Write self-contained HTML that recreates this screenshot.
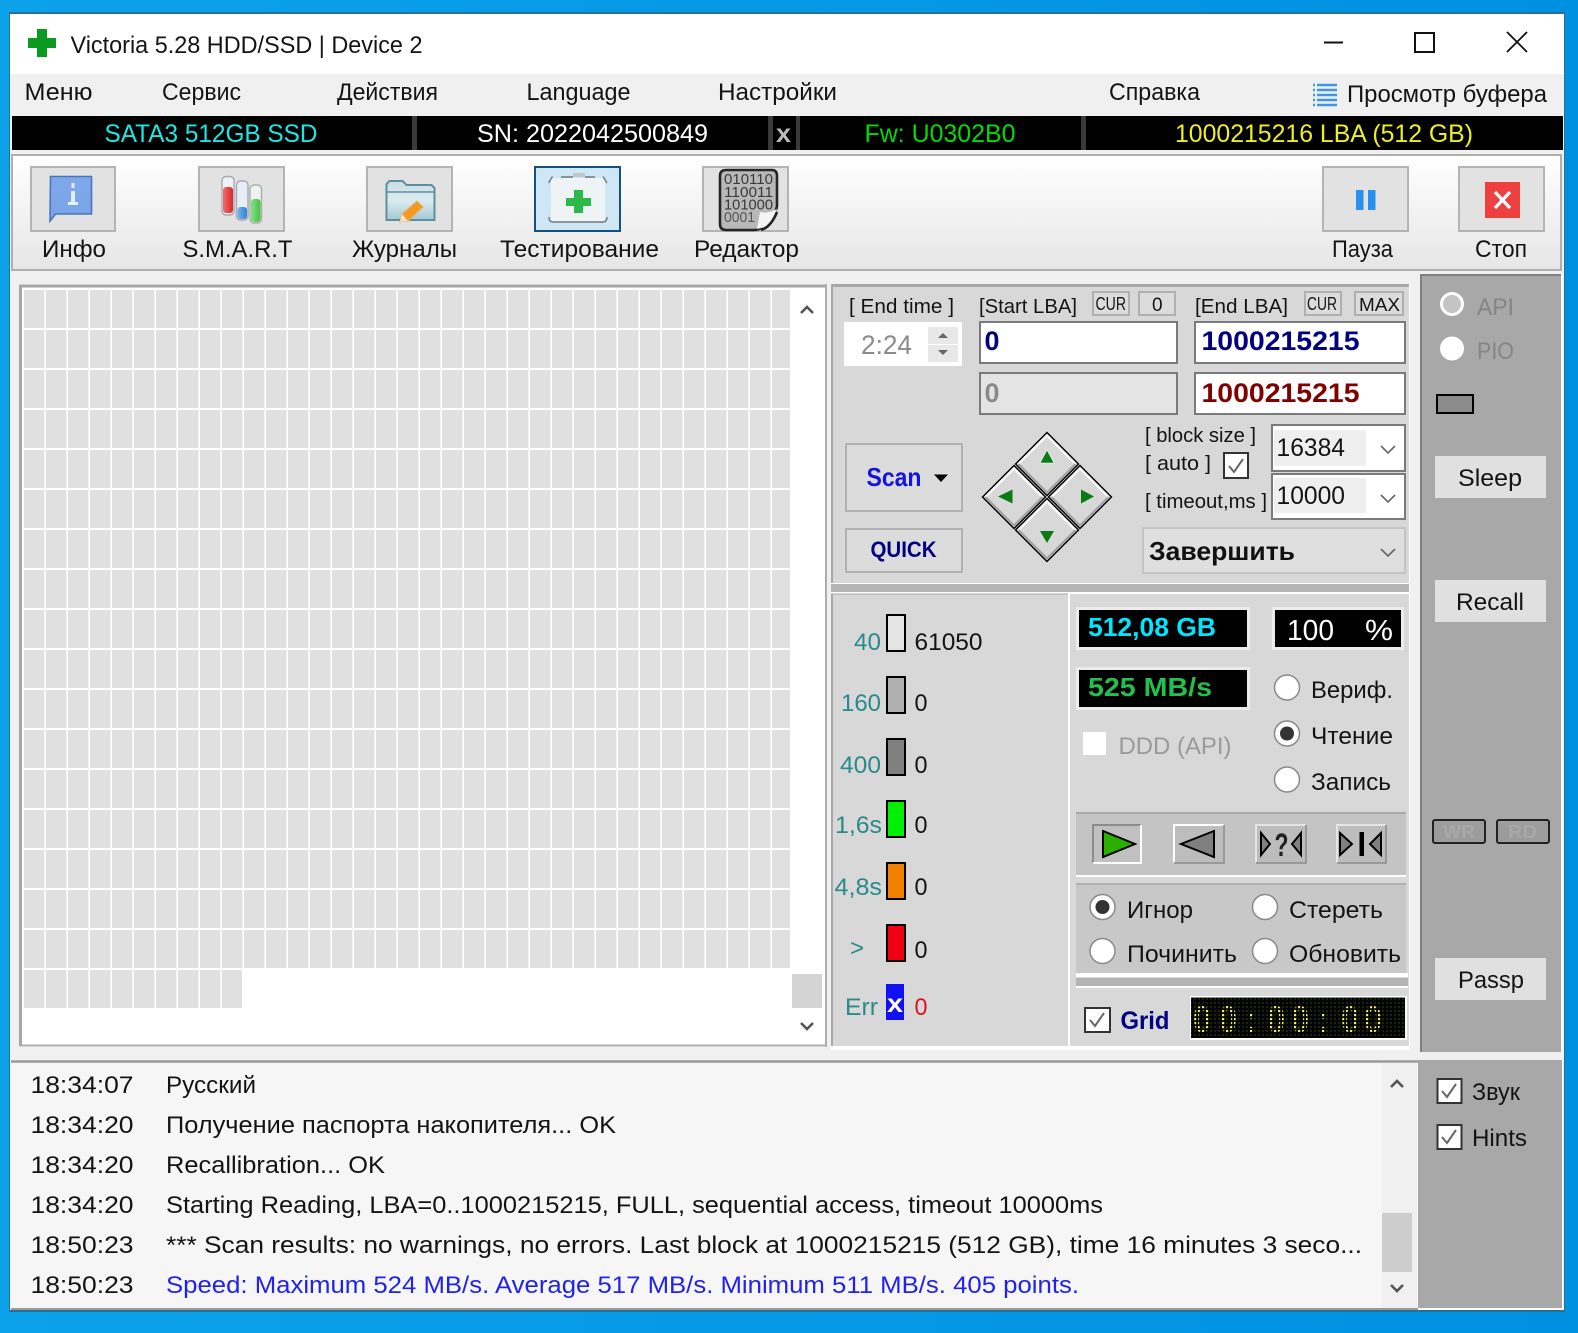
<!DOCTYPE html>
<html lang="ru"><head><meta charset="utf-8"><title>Victoria 5.28</title>
<style>
html,body{margin:0;padding:0;width:1578px;height:1333px;overflow:hidden;background:#0a9ae8}
svg{display:block}
text{font-family:"Liberation Sans","DejaVu Sans",sans-serif;fill:#141414;font-size:24px;white-space:pre}
.b{font-weight:bold}
.t{fill:#2a8a8c}
.btn{fill:#e2e2e2;stroke:#b4b4b4;stroke-width:2}
.sm{fill:#dcdcdc;stroke:#b0b0b0;stroke-width:2}
.inp{fill:#fff;stroke:#7a7a7a;stroke-width:2}
.chev{fill:none;stroke:#666;stroke-width:1.6}
.sbtn{fill:#e0e0e0}
.led{fill:url(#leddot);font-size:37px;font-weight:bold}
</style></head><body>
<svg width="1578" height="1333" viewBox="0 0 1578 1333" xmlns="http://www.w3.org/2000/svg">
<defs>
<linearGradient id="bg" x1="0" x2="1" y1="0" y2="0"><stop offset="0" stop-color="#0ba2ea"/><stop offset="1" stop-color="#0090e2"/></linearGradient>
<linearGradient id="tb" x1="0" x2="0" y1="0" y2="1"><stop offset="0" stop-color="#ffffff"/><stop offset="1" stop-color="#e6e6e6"/></linearGradient>
<linearGradient id="fold" x1="0" x2="0" y1="0" y2="1"><stop offset="0" stop-color="#c9dde4"/><stop offset=".5" stop-color="#dcecf0"/><stop offset="1" stop-color="#a3c9d2"/></linearGradient>
<linearGradient id="inf" x1="0" x2="0" y1="0" y2="1"><stop offset="0" stop-color="#7fa9ec"/><stop offset="1" stop-color="#78a4e6"/></linearGradient>
<linearGradient id="red" x1="0" x2="1" y1="0" y2="0"><stop offset="0" stop-color="#ec7070"/><stop offset=".7" stop-color="#e23a3a"/><stop offset="1" stop-color="#c83030"/></linearGradient>
<linearGradient id="blu" x1="0" x2="1" y1="0" y2="0"><stop offset="0" stop-color="#7ab4ea"/><stop offset="1" stop-color="#2a80d8"/></linearGradient>
<linearGradient id="grn" x1="0" x2="1" y1="0" y2="0"><stop offset="0" stop-color="#84e084"/><stop offset="1" stop-color="#48c048"/></linearGradient>
<pattern id="cells" x="24" y="290" width="22" height="40" patternUnits="userSpaceOnUse"><rect width="20.4" height="38" fill="#e0e0e0"/></pattern>
<pattern id="ledbg" x="1193" y="1005" width="4" height="4" patternUnits="userSpaceOnUse"><rect width="4" height="4" fill="#020302"/><rect x="1" y="1" width="2" height="2" fill="#1a2410"/></pattern>
<pattern id="leddot" x="1193" y="1005" width="4" height="4" patternUnits="userSpaceOnUse"><rect x="1" y="1" width="2.2" height="2.2" fill="#f0f05a"/></pattern>
<g id="dm">
<path d="M0 -31.5L31.5 0 0 31.5 -31.5 0z" fill="#d8d8d8" stroke="#000" stroke-width="1.4"/>
<path d="M-28.5 0L0 -28.5 28.5 0" fill="none" stroke="#fff" stroke-width="2"/>
<path d="M28.5 0L0 28.5 -28.5 0" fill="none" stroke="#a0a0a0" stroke-width="2"/>
</g>
</defs>

<rect width="1578" height="1333" fill="url(#bg)"/>
<!-- window -->
<rect x="9" y="12" width="1556" height="1300" fill="#2a6f94"/>
<rect x="10" y="14" width="1554" height="1296" fill="#f0f0f0"/>
<rect x="10" y="14" width="1554" height="60" fill="#fff"/>
<path d="M37 29h10v9h9v10h-9v9h-10v-9h-9v-10h9z" fill="#0a9a20"/>
<text x="70.5" y="53" textLength="352" lengthAdjust="spacingAndGlyphs">Victoria 5.28 HDD/SSD | Device 2</text>
<path d="M1324 42.5h19" stroke="#111" stroke-width="2"/>
<rect x="1415" y="33" width="19" height="19" fill="none" stroke="#111" stroke-width="2"/>
<path d="M1507 32l20 20M1527 32l-20 20" stroke="#111" stroke-width="1.8"/>

<!-- menu -->
<text x="24.5" y="100" textLength="68" lengthAdjust="spacingAndGlyphs">Меню</text>
<text x="162" y="100" textLength="79" lengthAdjust="spacingAndGlyphs">Сервис</text>
<text x="337" y="100" textLength="101" lengthAdjust="spacingAndGlyphs">Действия</text>
<text x="526.5" y="100" textLength="104" lengthAdjust="spacingAndGlyphs">Language</text>
<text x="718" y="100" textLength="119" lengthAdjust="spacingAndGlyphs">Настройки</text>
<text x="1109" y="100" textLength="91" lengthAdjust="spacingAndGlyphs">Справка</text>
<path d="M1317 85h20M1317 90h20M1317 95h20M1317 100h20M1317 105h20" stroke="#3f97e4" stroke-width="2.4"/>
<path d="M1313 85h2M1313 90h2M1313 95h2M1313 100h2M1313 105h2" stroke="#3f97e4" stroke-width="2.4"/>
<text x="1347" y="102" textLength="200" lengthAdjust="spacingAndGlyphs">Просмотр буфера</text>

<!-- black bar -->
<rect x="12" y="116" width="1551" height="34" fill="#000"/>
<rect x="412" y="116" width="5" height="34" fill="#3a3a3a"/>
<rect x="768" y="116" width="5" height="34" fill="#3a3a3a"/>
<rect x="796" y="116" width="4" height="34" fill="#3a3a3a"/>
<rect x="1081" y="116" width="5" height="34" fill="#3a3a3a"/>
<text x="104.5" y="142" textLength="213" lengthAdjust="spacingAndGlyphs" style="fill:#1fe6e0;font-size:25px">SATA3 512GB SSD</text>
<text x="477" y="142" textLength="231" lengthAdjust="spacingAndGlyphs" style="fill:#fff;font-size:25px">SN: 2022042500849</text>
<text x="776" y="142" textLength="15" lengthAdjust="spacingAndGlyphs" class="b" style="fill:#bbb;font-size:25px">x</text>
<text x="864.5" y="142" textLength="151" lengthAdjust="spacingAndGlyphs" style="fill:#00dc00;font-size:25px">Fw: U0302B0</text>
<text x="1175" y="142" textLength="298" lengthAdjust="spacingAndGlyphs" style="fill:#eeee22;font-size:25px">1000215216 LBA (512 GB)</text>

<!-- toolbar -->
<rect x="12" y="155" width="1549" height="115" fill="url(#tb)" stroke="#aeaeae" stroke-width="2"/>
<rect x="31" y="167" width="84" height="64" class="btn"/>
<rect x="199" y="167" width="85" height="64" class="btn"/>
<rect x="367" y="167" width="85" height="64" class="btn"/>
<rect x="535" y="167" width="85" height="64" fill="#cfe6f7" stroke="#14527e" stroke-width="2"/>
<rect x="703" y="167" width="85" height="64" class="btn"/>
<rect x="1323" y="167" width="85" height="64" class="btn"/>
<rect x="1459" y="167" width="85" height="64" class="btn"/>

<!-- info icon -->
<path d="M50.5 176.5h41v37.5h-36l-5.5 7z" fill="url(#inf)" stroke="#4c74ba" stroke-width="1.6"/>
<path d="M71.5 183h3v5h-3zM71 191h4v11h3v3h-10v-3h3z" fill="#e4effb"/>
<!-- smart -->
<rect x="222" y="176.5" width="12" height="38.5" rx="4" fill="#eef2f8" stroke="#a8a8b0" stroke-width="1.4"/>
<rect x="223" y="187" width="10" height="26" rx="3" fill="url(#red)"/>
<rect x="236.5" y="181" width="11.5" height="39" rx="4" fill="#e8eef8" stroke="#a8a8b0" stroke-width="1.4"/>
<rect x="237.5" y="207" width="9.5" height="12" rx="3" fill="url(#blu)"/>
<rect x="250" y="185" width="11.5" height="38" rx="4" fill="#eef2f0" stroke="#a8b0a8" stroke-width="1.4"/>
<rect x="251" y="199" width="9.5" height="23" rx="3" fill="url(#grn)"/>
<!-- journal -->
<path d="M386.5 220v-36l3-3h13l4 4h25l3 3v32z" fill="url(#fold)" stroke="#5f8f9f" stroke-width="2"/>
<path d="M387 192h47" stroke="#5f8f9f" stroke-width="1.6"/>
<path d="M417 201l6 6-15 14-8 1 2-8z" fill="#f39a1f" stroke="#e8b070" stroke-width="1"/>
<path d="M402 214l6 7-8 1z" fill="#f0e4d0"/>
<!-- clipboard -->
<rect x="551" y="178" width="54" height="44" rx="3" fill="#eef3f6"/>
<path d="M548.5 183l4-6.5M607 183l-4-6.5M561 177h12M585 177h10M549 217q0 5 4 5h50q4 0 4-5" stroke="#6e7a80" stroke-width="1.4" fill="none"/>
<rect x="573" y="173" width="12" height="4" fill="#bcc6cc"/>
<path d="M574 190h9v8h8v8h-8v7h-9v-7h-8v-8h8z" fill="#2db84a"/>
<!-- binary -->
<path d="M726 170h46q5 0 5 6v30q-1 6-5 11l-10 10q-3 3-8 3h-28q-6 0-6-6v-48q0-6 6-6z" fill="#b8b8b8" stroke="#262626" stroke-width="2.6"/>
<text x="724" y="184" textLength="49" lengthAdjust="spacingAndGlyphs" style="font-size:15px;fill:#3a3a3a">010110</text>
<text x="724" y="197" textLength="49" lengthAdjust="spacingAndGlyphs" style="font-size:15px;fill:#3a3a3a">110011</text>
<text x="724" y="209.5" textLength="49" lengthAdjust="spacingAndGlyphs" style="font-size:15px;fill:#3a3a3a">101000</text>
<text x="724" y="222" textLength="31" lengthAdjust="spacingAndGlyphs" style="font-size:15px;fill:#555">0001</text>
<path d="M757 229l3-17q8 2 17-3-3 12-12 18z" fill="#f4f4f4"/>
<path d="M761 230q10-3 16-18" fill="none" stroke="#222" stroke-width="2.6"/>
<!-- pause / stop -->
<rect x="1356" y="190" width="7.5" height="20" fill="#2a90f0"/><rect x="1368" y="190" width="7.5" height="20" fill="#2a90f0"/>
<rect x="1485" y="182" width="35" height="36" fill="#ef4040"/>
<path d="M1495 192l15 16M1510 192l-15 16" stroke="#fff" stroke-width="3.4"/>

<text x="42" y="257" textLength="64" lengthAdjust="spacingAndGlyphs">Инфо</text>
<text x="182.5" y="257" textLength="110" lengthAdjust="spacingAndGlyphs">S.M.A.R.T</text>
<text x="352" y="257" textLength="105" lengthAdjust="spacingAndGlyphs">Журналы</text>
<text x="500" y="257" textLength="159" lengthAdjust="spacingAndGlyphs">Тестирование</text>
<text x="694" y="257" textLength="105" lengthAdjust="spacingAndGlyphs">Редактор</text>
<text x="1332" y="257" textLength="61" lengthAdjust="spacingAndGlyphs">Пауза</text>
<text x="1475" y="257" textLength="52" lengthAdjust="spacingAndGlyphs">Стоп</text>

<!-- grid box -->
<rect x="19" y="284" width="808" height="763" fill="#fff"/>
<path d="M20.5 1046V286h806" fill="none" stroke="#a6a6a6" stroke-width="3"/>
<path d="M19 1045.5h808M826 284v763" fill="none" stroke="#adadad" stroke-width="2"/>
<rect x="24" y="290" width="766" height="678" fill="url(#cells)"/>
<rect x="24" y="970" width="218" height="38" fill="url(#cells)"/>
<rect x="792" y="974" width="30" height="34" fill="#d4d4d4"/>
<path d="M801 313l6-6 6 6" fill="none" stroke="#555" stroke-width="2.6"/>
<path d="M801 1023l6 6 6-6" fill="none" stroke="#555" stroke-width="2.6"/>

<!-- control panel -->
<rect x="831" y="284" width="579" height="766" fill="#fff"/>
<rect x="831" y="284" width="578" height="299" fill="#d8d8d8"/>
<path d="M831 285.5h578" stroke="#a8a8a8" stroke-width="3"/>
<path d="M832 284v299" stroke="#a8a8a8" stroke-width="2"/>
<rect x="831" y="584" width="578" height="8" fill="#b4b4b4"/>

<text x="849" y="313" textLength="105" lengthAdjust="spacingAndGlyphs" style="font-size:20px">[ End time ]</text>
<text x="979" y="313" textLength="98" lengthAdjust="spacingAndGlyphs" style="font-size:20px">[Start LBA]</text>
<rect x="1093" y="292" width="36" height="23" class="sm"/>
<text x="1095.5" y="310" textLength="30.5" lengthAdjust="spacingAndGlyphs" style="font-size:18px">CUR</text>
<rect x="1139" y="292" width="36" height="23" class="sm"/>
<text x="1152" y="311" style="font-size:19px">0</text>
<text x="1195" y="313" textLength="93" lengthAdjust="spacingAndGlyphs" style="font-size:20px">[End LBA]</text>
<rect x="1305" y="292" width="36" height="23" class="sm"/>
<text x="1307" y="310" textLength="30" lengthAdjust="spacingAndGlyphs" style="font-size:18px">CUR</text>
<rect x="1355" y="292" width="48" height="23" class="sm"/>
<text x="1359" y="311" textLength="41" lengthAdjust="spacingAndGlyphs" style="font-size:18px">MAX</text>

<rect x="844" y="322" width="118" height="44" fill="#fff"/>
<text x="861" y="354" textLength="51" lengthAdjust="spacingAndGlyphs" style="fill:#8a8a8a;font-size:27px">2:24</text>
<rect x="928" y="327" width="30" height="17" fill="#e8e8e8"/><rect x="928" y="345" width="30" height="17" fill="#e8e8e8"/>
<path d="M938 338l5-5 5 5z" fill="#666"/><path d="M938 350l5 5 5-5z" fill="#666"/>

<rect x="980" y="322" width="197" height="41" class="inp"/>
<text x="984.5" y="350" textLength="15" lengthAdjust="spacingAndGlyphs" class="b" style="fill:#000080;font-size:27px">0</text>
<rect x="1195" y="322" width="210" height="41" class="inp"/>
<text x="1201.5" y="350" textLength="158" lengthAdjust="spacingAndGlyphs" class="b" style="fill:#000080;font-size:27px">1000215215</text>
<rect x="980" y="373" width="197" height="41" fill="#e4e4e4" stroke="#7a7a7a" stroke-width="2"/>
<text x="984.5" y="402" textLength="15" lengthAdjust="spacingAndGlyphs" class="b" style="fill:#8a8a8a;font-size:27px">0</text>
<rect x="1195" y="373" width="210" height="41" class="inp"/>
<text x="1201.5" y="402" textLength="158" lengthAdjust="spacingAndGlyphs" class="b" style="fill:#800000;font-size:27px">1000215215</text>

<rect x="846" y="444" width="116" height="67" class="sm"/>
<text x="866.5" y="486" textLength="55" lengthAdjust="spacingAndGlyphs" class="b" style="fill:#1414e0;font-size:26px">Scan</text>
<path d="M934 474.5h14l-7 7.5z" fill="#000"/>
<rect x="846" y="529" width="116" height="43" class="sm"/>
<text x="870.5" y="557" textLength="66" lengthAdjust="spacingAndGlyphs" class="b" style="fill:#000080;font-size:22px">QUICK</text>

<!-- diamond -->
<use href="#dm" x="1047" y="464"/>
<use href="#dm" x="1014" y="497"/>
<use href="#dm" x="1080" y="497"/>
<use href="#dm" x="1047" y="530"/>
<path d="M1047 450l7 13h-14z" fill="#0a7a14" stroke="#fff" stroke-width=".6"/>
<path d="M998 496.5l14.5-7v14z" fill="#0a7a14"/>
<path d="M1094 496.5l-13-7v14z" fill="#0a7a14"/>
<path d="M1040 531h14l-7 12z" fill="#0a7a14"/>

<text x="1145" y="442" textLength="111" lengthAdjust="spacingAndGlyphs" style="font-size:20px">[ block size ]</text>
<text x="1145" y="470" textLength="66" lengthAdjust="spacingAndGlyphs" style="font-size:20px">[ auto ]</text>
<rect x="1224" y="453" width="24" height="25" fill="#fff" stroke="#333" stroke-width="2"/>
<path d="M1229 466l5 6 9-13" fill="none" stroke="#666" stroke-width="2"/>
<text x="1145" y="508" textLength="122" lengthAdjust="spacingAndGlyphs" style="font-size:20px">[ timeout,ms ]</text>
<rect x="1272" y="425" width="133" height="46" class="inp" stroke="#999"/>
<rect x="1274" y="430" width="92" height="36" fill="#efefef"/>
<text x="1276.5" y="456" textLength="68.5" lengthAdjust="spacingAndGlyphs" style="font-size:25px">16384</text>
<path class="chev" d="M1381 446l7 7 7-7"/>
<rect x="1272" y="474" width="133" height="45" class="inp" stroke="#999"/>
<rect x="1274" y="478" width="92" height="35" fill="#efefef"/>
<text x="1276.5" y="504" textLength="68.5" lengthAdjust="spacingAndGlyphs" style="font-size:25px">10000</text>
<path class="chev" d="M1381 495l7 7 7-7"/>
<rect x="1143" y="528" width="262" height="45" fill="#dfdfdf" stroke="#c4c4c4" stroke-width="2"/>
<text x="1149" y="560" textLength="146" lengthAdjust="spacingAndGlyphs" class="b" style="fill:#111;font-size:26px">Завершить</text>
<path class="chev" d="M1381 549l7 7 7-7"/>

<!-- legend -->
<rect x="831" y="594" width="237" height="452" fill="#d8d8d8"/>
<path d="M832 594v452" stroke="#a8a8a8" stroke-width="2"/>
<path d="M831 594h237" stroke="#a8a8a8" stroke-width="1"/>
<rect x="1070" y="594" width="339" height="452" fill="#d8d8d8"/>
<g stroke="#000" stroke-width="2">
<rect x="887" y="615" width="18" height="36" fill="#e4e4e4"/>
<rect x="887" y="677" width="18" height="36" fill="#b0b0b0"/>
<rect x="887" y="739" width="18" height="36" fill="#808080"/>
<rect x="887" y="801" width="18" height="36" fill="#00f000"/>
<rect x="887" y="863" width="18" height="36" fill="#f28000"/>
<rect x="887" y="925" width="18" height="36" fill="#f00010"/>
</g>
<rect x="886" y="984" width="18" height="36" fill="#1010f0"/>
<text x="887" y="1012" textLength="16" lengthAdjust="spacingAndGlyphs" class="b" style="fill:#fff;font-size:26px">x</text>
<text class="t" x="854" y="650" textLength="27" lengthAdjust="spacingAndGlyphs">40</text>
<text class="t" x="841" y="711" textLength="40" lengthAdjust="spacingAndGlyphs">160</text>
<text class="t" x="840" y="773" textLength="41" lengthAdjust="spacingAndGlyphs">400</text>
<text class="t" x="835" y="833" textLength="47" lengthAdjust="spacingAndGlyphs">1,6s</text>
<text class="t" x="834.5" y="895" textLength="47.5" lengthAdjust="spacingAndGlyphs">4,8s</text>
<text class="t" x="850" y="956" textLength="14" lengthAdjust="spacingAndGlyphs">&gt;</text>
<text class="t" x="845" y="1015" textLength="33" lengthAdjust="spacingAndGlyphs">Err</text>
<text x="914.5" y="650" textLength="68" lengthAdjust="spacingAndGlyphs">61050</text>
<text x="914.5" y="711" textLength="13" lengthAdjust="spacingAndGlyphs">0</text>
<text x="914.5" y="773" textLength="13" lengthAdjust="spacingAndGlyphs">0</text>
<text x="914.5" y="833" textLength="13" lengthAdjust="spacingAndGlyphs">0</text>
<text x="914.5" y="895" textLength="13" lengthAdjust="spacingAndGlyphs">0</text>
<text x="914.5" y="958" textLength="13" lengthAdjust="spacingAndGlyphs">0</text>
<text x="914.5" y="1015" textLength="13" lengthAdjust="spacingAndGlyphs" style="fill:#e01020">0</text>

<!-- readouts -->
<rect x="1077.5" y="608.5" width="171" height="40" fill="#000" stroke="#ececec" stroke-width="3"/>
<text x="1088" y="636" textLength="128" lengthAdjust="spacingAndGlyphs" class="b" style="fill:#00e6ff;font-size:26px">512,08 GB</text>
<rect x="1273.5" y="608.5" width="129" height="40" fill="#000" stroke="#ececec" stroke-width="3"/>
<text x="1287" y="640" textLength="47" lengthAdjust="spacingAndGlyphs" style="fill:#fff;font-size:29px">100</text>
<text x="1365" y="640" textLength="28" lengthAdjust="spacingAndGlyphs" style="fill:#fff;font-size:29px">%</text>
<rect x="1077.5" y="668.5" width="171" height="40" fill="#000" stroke="#ececec" stroke-width="3"/>
<text x="1088" y="696" textLength="124" lengthAdjust="spacingAndGlyphs" class="b" style="fill:#22c050;font-size:26px">525 MB/s</text>
<rect x="1083" y="732" width="23" height="23" fill="#fff"/>
<text x="1118.5" y="754" textLength="113" lengthAdjust="spacingAndGlyphs" style="fill:#9a9a9a">DDD (API)</text>

<g fill="#fff" stroke="#8a8a8a" stroke-width="1.5">
<circle cx="1287" cy="687.5" r="12.5"/><circle cx="1287" cy="733.5" r="12.5"/><circle cx="1287" cy="779.5" r="12.5"/>
</g>
<circle cx="1287" cy="733.5" r="7" fill="#333"/>
<text x="1311" y="698" textLength="82" lengthAdjust="spacingAndGlyphs">Вериф.</text>
<text x="1311" y="744" textLength="82" lengthAdjust="spacingAndGlyphs">Чтение</text>
<text x="1311" y="790" textLength="80" lengthAdjust="spacingAndGlyphs">Запись</text>

<rect x="1076" y="813" width="330" height="62" fill="#c4c4c4"/>
<path d="M1076 813h330" stroke="#aaa" stroke-width="2"/>
<rect x="1076" y="875" width="330" height="2" fill="#fff"/>
<rect x="1093" y="825" width="48" height="38" fill="#c0c0c0"/><path d="M1093 863v-38h48" fill="none" stroke="#8c8c8c" stroke-width="2"/><path d="M1093 863h48v-38" fill="none" stroke="#fff" stroke-width="2"/>
<g fill="#bdbdbd"><rect x="1174" y="825" width="50" height="38"/><rect x="1256" y="825" width="50" height="38"/><rect x="1337" y="825" width="49" height="38"/></g>
<g fill="none" stroke-width="2">
<path d="M1174 863v-38h50" stroke="#fff"/><path d="M1174 863h50v-38" stroke="#999"/>
<path d="M1256 863v-38h50" stroke="#e4e4e4"/><path d="M1256 863h50v-38" stroke="#999"/>
<path d="M1337 863v-38h49" stroke="#e4e4e4"/><path d="M1337 863h49v-38" stroke="#999"/>
</g>
<path d="M1103 831l32 13-32 13z" fill="#2cb000" stroke="#000" stroke-width="2"/>
<path d="M1214 831l-33 13 33 13z" fill="#808080" stroke="#000" stroke-width="2"/>
<path d="M1261 833l9 11-9 11z" fill="#808080" stroke="#000" stroke-width="2"/>
<path d="M1301 833l-9 11 9 11z" fill="#808080" stroke="#000" stroke-width="2"/>
<text x="1274.5" y="856" textLength="14" lengthAdjust="spacingAndGlyphs" class="b" style="fill:#222;font-size:32px">?</text>
<path d="M1340 833l12 11-12 11z" fill="#808080" stroke="#000" stroke-width="2"/>
<path d="M1381 833l-11 11 11 11z" fill="#808080" stroke="#000" stroke-width="2"/>
<rect x="1359.5" y="832" width="4.5" height="24" fill="#000"/>

<rect x="1076" y="883" width="330" height="90" fill="#c8c8c8"/>
<path d="M1076 884h330" stroke="#b0b0b0" stroke-width="2"/>
<rect x="1076" y="973" width="332" height="4" fill="#fff"/>
<rect x="1076" y="978" width="332" height="8" fill="#b4b4b4"/>
<rect x="1076" y="986" width="332" height="2" fill="#fff"/>
<g fill="#fff" stroke="#8a8a8a" stroke-width="1.5">
<circle cx="1102.5" cy="907" r="12.5"/><circle cx="1102.5" cy="951" r="12.5"/><circle cx="1265" cy="907" r="12.5"/><circle cx="1265" cy="951" r="12.5"/>
</g>
<circle cx="1102.5" cy="907" r="7" fill="#333"/>
<text x="1127" y="918" textLength="66" lengthAdjust="spacingAndGlyphs">Игнор</text>
<text x="1289" y="918" textLength="94" lengthAdjust="spacingAndGlyphs">Стереть</text>
<text x="1127" y="962" textLength="110" lengthAdjust="spacingAndGlyphs">Починить</text>
<text x="1289" y="962" textLength="112" lengthAdjust="spacingAndGlyphs">Обновить</text>

<rect x="1085" y="1008" width="25" height="24" fill="#fff" stroke="#333" stroke-width="2"/>
<path d="M1090 1020l5 6 9-13" fill="none" stroke="#666" stroke-width="2"/>
<text x="1120.5" y="1029" textLength="49" lengthAdjust="spacingAndGlyphs" class="b" style="fill:#000080;font-size:25px">Grid</text>
<rect x="1190" y="996" width="217" height="44" fill="#fff"/>
<rect x="1191" y="997" width="214" height="41" fill="url(#ledbg)"/>
<path d="M1191 997.5h214" stroke="#888" stroke-width="1"/>
<text class="led" x="1193" y="1032" textLength="18" lengthAdjust="spacingAndGlyphs">0</text>
<text class="led" x="1219" y="1032" textLength="18" lengthAdjust="spacingAndGlyphs">0</text>
<text class="led" x="1246" y="1032" textLength="9" lengthAdjust="spacingAndGlyphs">:</text>
<text class="led" x="1267" y="1032" textLength="18" lengthAdjust="spacingAndGlyphs">0</text>
<text class="led" x="1291" y="1032" textLength="18" lengthAdjust="spacingAndGlyphs">0</text>
<text class="led" x="1319" y="1032" textLength="9" lengthAdjust="spacingAndGlyphs">:</text>
<text class="led" x="1341" y="1032" textLength="18" lengthAdjust="spacingAndGlyphs">0</text>
<text class="led" x="1364" y="1032" textLength="18" lengthAdjust="spacingAndGlyphs">0</text>

<!-- sidebar -->
<rect x="1420" y="274" width="141" height="778" fill="#a8a8a8"/>
<path d="M1421 274v778" stroke="#808080" stroke-width="2"/><path d="M1420 275h141" stroke="#808080" stroke-width="2"/>
<path d="M1562 274v1034" stroke="#f8f8f8" stroke-width="2"/>
<circle cx="1452" cy="304" r="10.5" fill="#c4c4c4" stroke="#fff" stroke-width="3"/>
<circle cx="1452" cy="348.5" r="12" fill="#fff"/>
<text x="1477" y="315" textLength="37" lengthAdjust="spacingAndGlyphs" style="fill:#858585">API</text>
<text x="1477" y="359" textLength="37" lengthAdjust="spacingAndGlyphs" style="fill:#858585">PIO</text>
<rect x="1437" y="395" width="36" height="18" fill="#8c8c8c" stroke="#000" stroke-width="2"/>
<rect x="1435" y="456" width="111" height="42" class="sbtn"/>
<text x="1458" y="486" textLength="64" lengthAdjust="spacingAndGlyphs">Sleep</text>
<rect x="1435" y="580" width="111" height="42" class="sbtn"/>
<text x="1456" y="610" textLength="68" lengthAdjust="spacingAndGlyphs">Recall</text>
<rect x="1435" y="958" width="111" height="42" class="sbtn"/>
<text x="1458" y="988" textLength="66" lengthAdjust="spacingAndGlyphs">Passp</text>
<rect x="1433" y="820" width="52" height="23" rx="2" fill="#9c9c9c" stroke="#222" stroke-width="2"/>
<rect x="1497" y="820" width="52" height="23" rx="2" fill="#9c9c9c" stroke="#222" stroke-width="2"/>
<text x="1443" y="838" textLength="32" lengthAdjust="spacingAndGlyphs" class="b" style="fill:#a8a8a8;font-size:18px">WR</text>
<text x="1508" y="838" textLength="29" lengthAdjust="spacingAndGlyphs" class="b" style="fill:#a8a8a8;font-size:18px">RD</text>

<!-- log -->
<rect x="11" y="1060" width="1407" height="249" fill="#f6f6f6"/>
<path d="M11 1061.5h1407" stroke="#9a9a9a" stroke-width="2.4"/>
<path d="M11 1309h1407" stroke="#9a9a9a" stroke-width="2"/>
<rect x="1382" y="1063" width="35" height="245" fill="#f0f0f0"/>
<rect x="1382" y="1213" width="30" height="59" fill="#cdcdcd"/>
<path d="M1391 1087l6-6 6 6" fill="none" stroke="#555" stroke-width="2.6"/>
<path d="M1391 1285l6 6 6-6" fill="none" stroke="#555" stroke-width="2.6"/>
<g style="font-size:25px">
<text x="30.5" y="1093" textLength="103" lengthAdjust="spacingAndGlyphs">18:34:07</text>
<text x="166" y="1093" textLength="90" lengthAdjust="spacingAndGlyphs">Русский</text>
<text x="30.5" y="1133" textLength="103" lengthAdjust="spacingAndGlyphs">18:34:20</text>
<text x="166" y="1133" textLength="450" lengthAdjust="spacingAndGlyphs">Получение паспорта накопителя... OK</text>
<text x="30.5" y="1173" textLength="103" lengthAdjust="spacingAndGlyphs">18:34:20</text>
<text x="166" y="1173" textLength="219" lengthAdjust="spacingAndGlyphs">Recallibration... OK</text>
<text x="30.5" y="1213" textLength="103" lengthAdjust="spacingAndGlyphs">18:34:20</text>
<text x="166" y="1213" textLength="937" lengthAdjust="spacingAndGlyphs">Starting Reading, LBA=0..1000215215, FULL, sequential access, timeout 10000ms</text>
<text x="30.5" y="1253" textLength="103" lengthAdjust="spacingAndGlyphs">18:50:23</text>
<text x="166" y="1253" textLength="1196" lengthAdjust="spacingAndGlyphs">*** Scan results: no warnings, no errors. Last block at 1000215215 (512 GB), time 16 minutes 3 seco...</text>
<text x="30.5" y="1293" textLength="103" lengthAdjust="spacingAndGlyphs">18:50:23</text>
<text x="166" y="1293" textLength="913" lengthAdjust="spacingAndGlyphs" style="fill:#2222ee">Speed: Maximum 524 MB/s. Average 517 MB/s. Minimum 511 MB/s. 405 points.</text>
</g>

<rect x="1418" y="1060" width="144" height="248" fill="#a8a8a8"/>
<rect x="1437.5" y="1079" width="24" height="24" fill="#fff" stroke="#333" stroke-width="2"/>
<path d="M1442 1091l5 6 9-13" fill="none" stroke="#666" stroke-width="2"/>
<rect x="1437.5" y="1125" width="24" height="24" fill="#fff" stroke="#333" stroke-width="2"/>
<path d="M1442 1137l5 6 9-13" fill="none" stroke="#666" stroke-width="2"/>
<text x="1472" y="1100" textLength="48" lengthAdjust="spacingAndGlyphs">Звук</text>
<text x="1472" y="1146" textLength="55" lengthAdjust="spacingAndGlyphs">Hints</text>
<path d="M1418 1309h146" stroke="#fff" stroke-width="2"/>
</svg>
</body></html>
